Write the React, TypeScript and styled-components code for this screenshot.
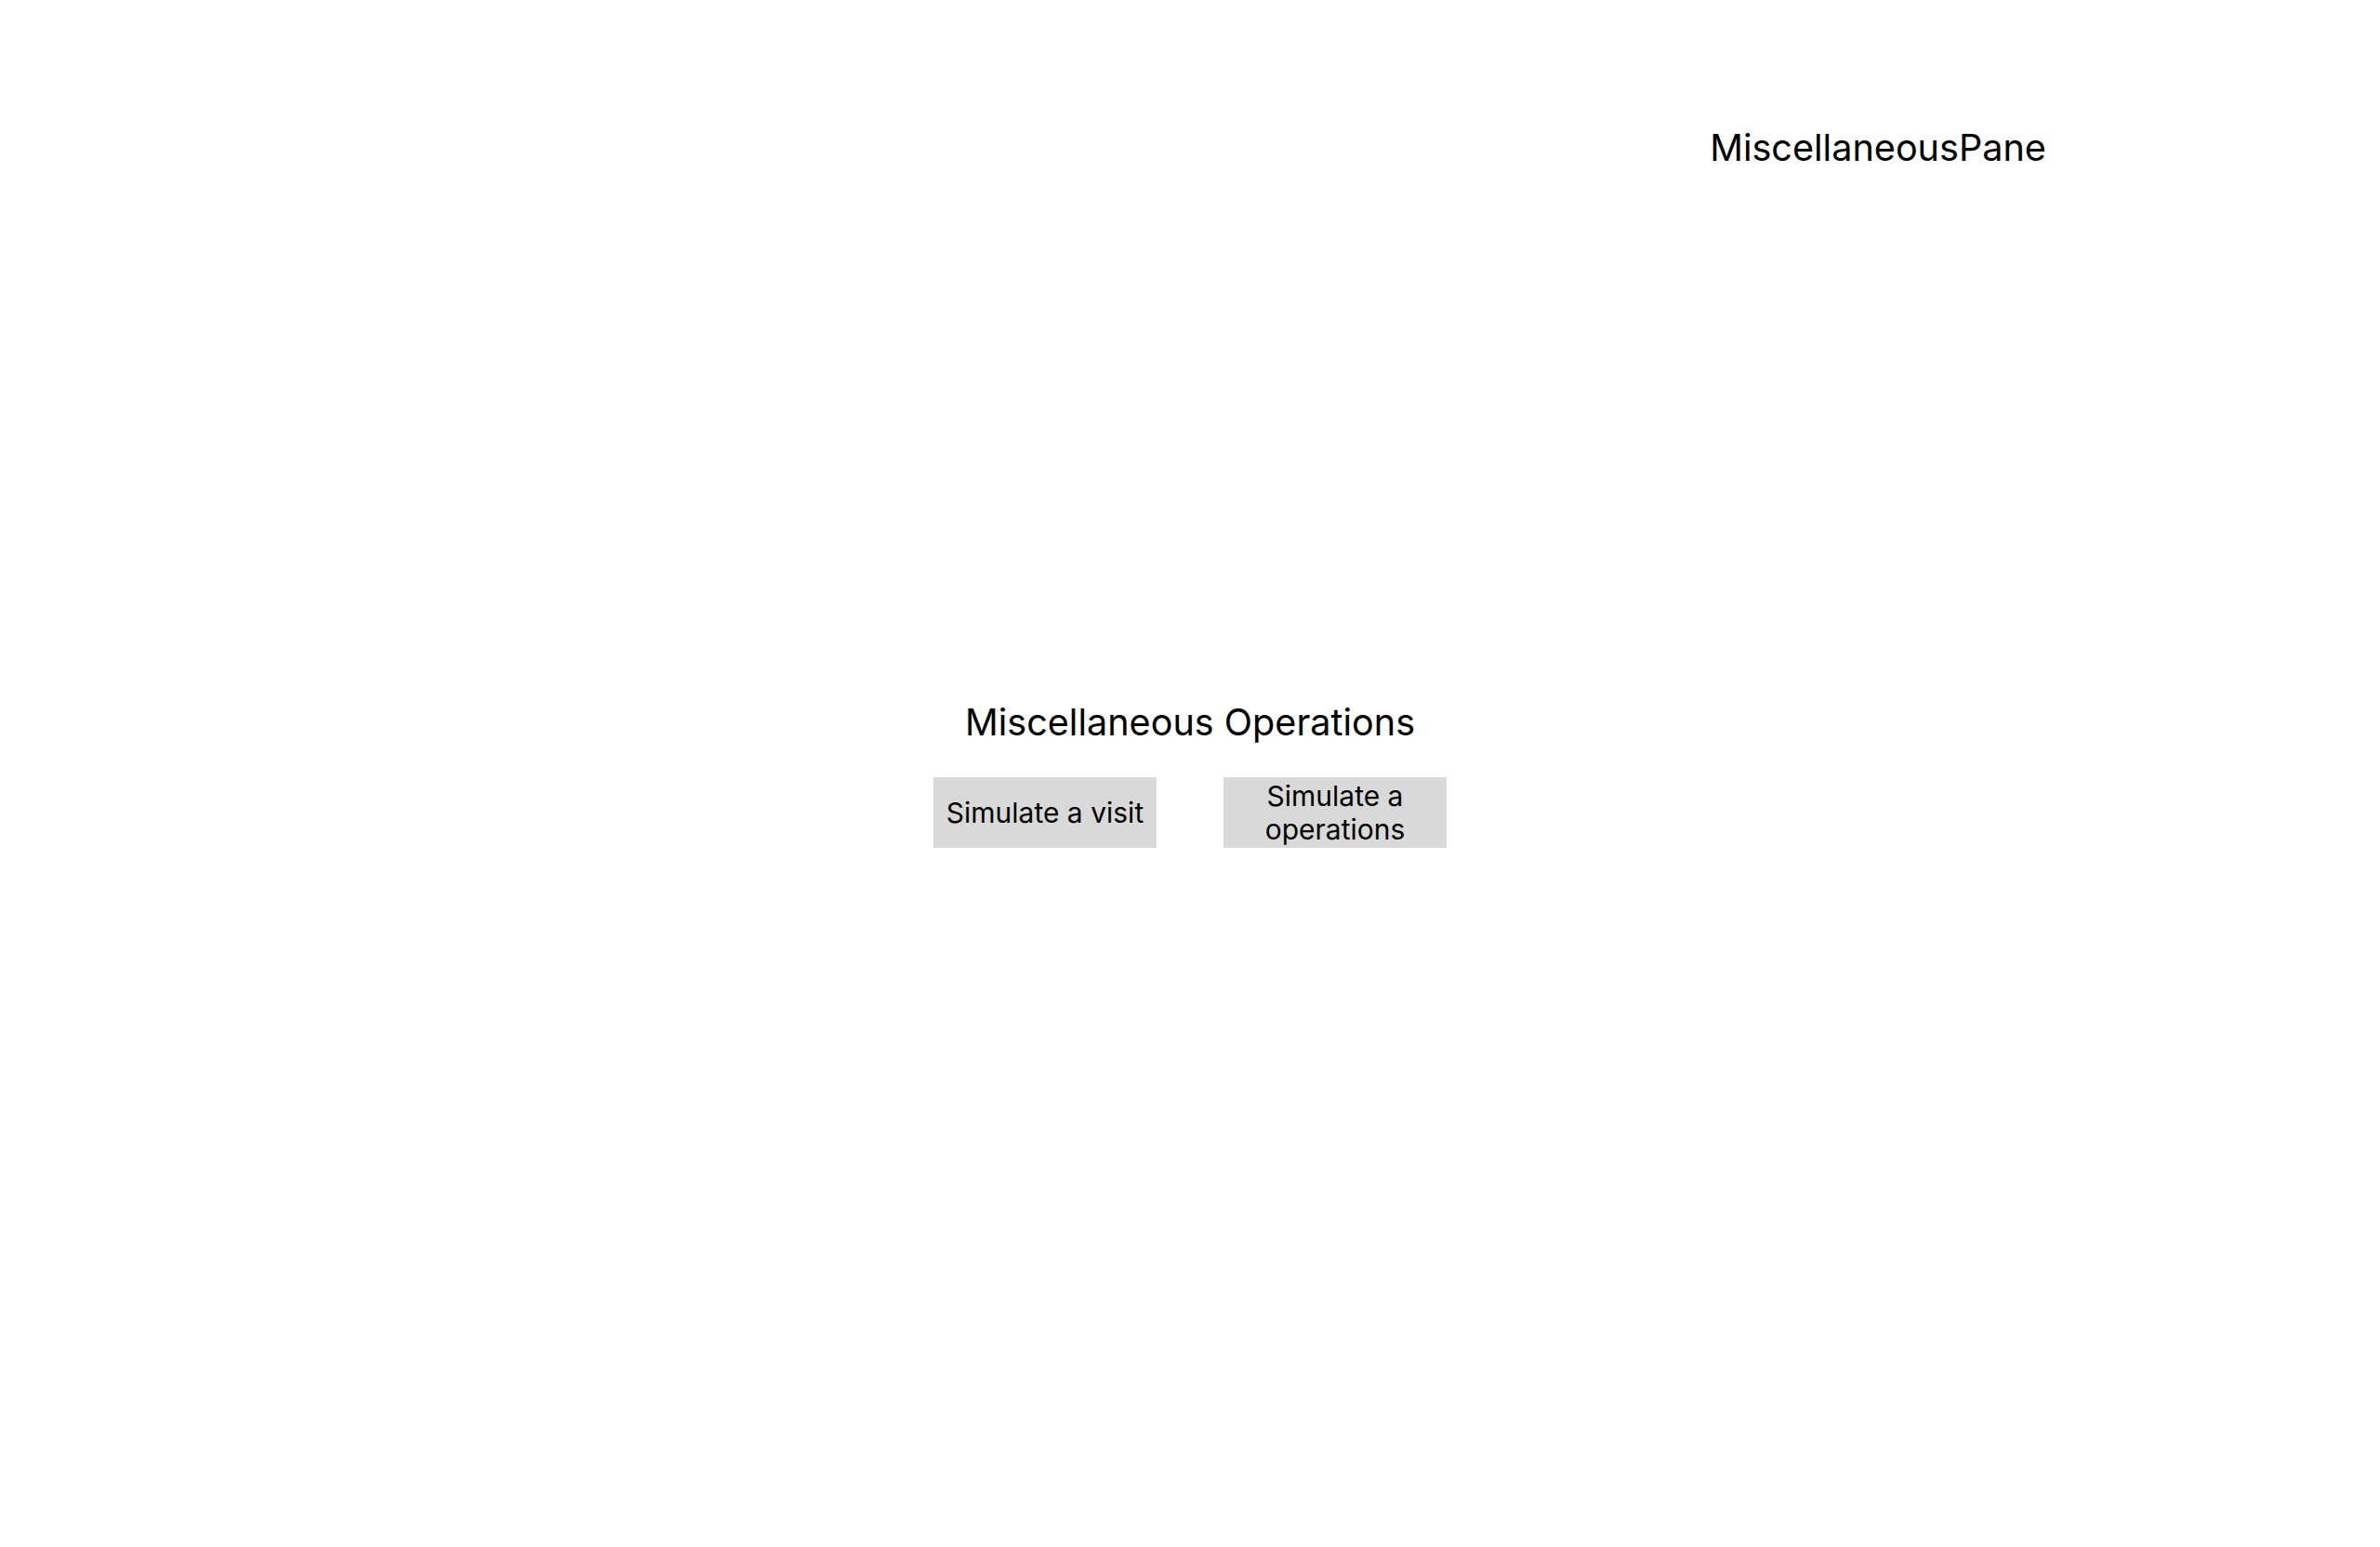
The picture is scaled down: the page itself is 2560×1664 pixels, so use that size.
import React from "react";
import styled, { createGlobalStyle } from "styled-components";

const GlobalStyle = createGlobalStyle`
  html, body {
    margin: 0;
    padding: 0;
    background: #ffffff;
  }
  body {
    font-family: Inter, "Noto Sans", "Liberation Sans", sans-serif;
    color: #000000;
  }
  * { box-sizing: border-box; }
`;

const Page = styled.div`
  display: grid;
  grid-template-columns: 1fr;
  grid-template-rows: 1fr;
  width: 100%;
  height: 100vh;
`;

const Header = styled.header`
  grid-area: 1 / 1;
  align-self: start;
  justify-self: end;
  width: 1080px;
  padding-top: 135px;
  text-align: center;
`;

const PaneTitle = styled.h1`
  margin: 0;
  font-size: 39.6px;
  font-weight: 400;
  line-height: normal;
`;

const Main = styled.main`
  grid-area: 1 / 1;
  align-self: center;
  justify-self: center;
  display: flex;
  flex-direction: column;
  align-items: center;
  gap: 35px;
`;

const SectionTitle = styled.h2`
  margin: 0;
  font-size: 39.6px;
  font-weight: 400;
  line-height: normal;
`;

const ButtonRow = styled.div`
  display: flex;
  gap: 72px;
`;

const ActionButton = styled.button`
  width: 240px;
  height: 76px;
  padding: 0 8px;
  border: none;
  border-radius: 0;
  background: #d9d9d9;
  color: #000000;
  font-family: Inter, "Noto Sans", "Liberation Sans", sans-serif;
  font-size: 30px;
  font-weight: 400;
  line-height: normal;
  text-align: center;
  cursor: pointer;
`;

export default function App() {
  return (
    <>
      <GlobalStyle />
      <Page>
        <Header>
          <PaneTitle>MiscellaneousPane</PaneTitle>
        </Header>
        <Main>
          <SectionTitle>Miscellaneous Operations</SectionTitle>
          <ButtonRow>
            <ActionButton>Simulate a visit</ActionButton>
            <ActionButton>Simulate a operations</ActionButton>
          </ButtonRow>
        </Main>
      </Page>
    </>
  );
}
